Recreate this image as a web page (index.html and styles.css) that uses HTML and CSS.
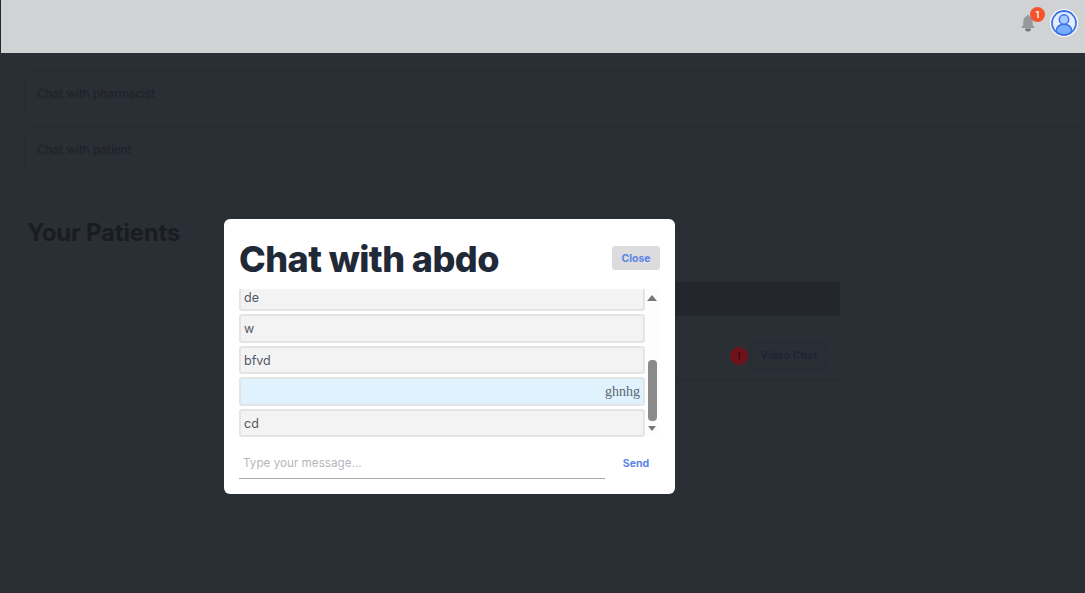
FILE: index.html
```html
<!DOCTYPE html>
<html lang="en">
<head>
<meta charset="utf-8">
<title>Chat</title>
<link rel="stylesheet" href="styles.css">
</head>
<body>
<header class="topbar">
  <div class="bell-wrap">
    <svg class="bell" viewBox="0 0 16 18" width="16" height="18"><path d="M8 1a1.300 1.300 0 0 0-1.300 1.300C4.300 3 3.300 5 3.300 7.500V11l-1.800 2.200V14h13v-.8L12.700 11V7.500C12.700 5 11.700 3 9.300 2.300A1.300 1.300 0 0 0 8 1z" fill="#96989b"/><path d="M5 14.500h6a3 3 0 0 1-6 0z" fill="#6f7377"/></svg>
    <span class="badge">1</span>
  </div>
  <div class="avatar">
    <svg viewBox="0 0 26 26" width="26" height="26"><circle cx="13" cy="13" r="12" fill="#e3edff" stroke="#3f73e0" stroke-width="1.800"/><path d="M5 21.500c.6-5 3.500-7.300 8-7.300s7.400 2.300 8 7.300A12 12 0 0 1 13 25a12 12 0 0 1-8-3.500z" fill="#78aeff" stroke="#3f73e0" stroke-width="1.500"/><circle cx="13" cy="9.500" r="4.700" fill="#a9caff" stroke="#3f73e0" stroke-width="1.500"/></svg>
  </div>
</header>
<main class="page">
  <div class="chat-card">Chat with pharmacist</div>
  <div class="chat-card">Chat with patient</div>
  <h2 class="section-title">Your Patients</h2>
  <div class="patients">
    <div class="table-head"></div>
    <div class="table-row">
      <span class="alert">!</span>
      <span class="video-btn">Video Chat</span>
    </div>
  </div>
</main>
<div class="modal">
  <div class="modal-head">
    <h1 class="modal-title">Chat with abdo</h1>
    <button class="close-btn">Close</button>
  </div>
  <div class="chat-body">
    <div class="messages">
      <div class="messages-inner">
        <div class="msg">de</div>
        <div class="msg">w</div>
        <div class="msg">bfvd</div>
        <div class="msg msg-own">ghnhg</div>
        <div class="msg">cd</div>
      </div>
    </div>
    <div class="scrollbar">
      <span class="arrow-up"></span>
      <span class="thumb"></span>
      <span class="arrow-down"></span>
    </div>
  </div>
  <div class="composer">
    <div class="input">Type your message...</div>
    <button class="send-btn">Send</button>
  </div>
</div>
</body>
</html>
```
FILE: styles.css
```css
* { box-sizing: border-box; }
html, body { margin: 0; height: 100%; }
body {
  background: #2a2e35;
  font-family: Inter, "Liberation Sans", sans-serif;
  overflow: hidden;
  position: relative;
}
.topbar {
  height: 53px;
  background: #d1d2d4;
  border-left: 1px solid #24272c;
  display: flex;
  justify-content: flex-end;
  align-items: flex-start;
  padding: 10px 8px 0 0;
}
.bell-wrap {
  position: relative;
  width: 16px;
  height: 18px;
  margin-top: 4px;
  margin-right: 15px;
}
.bell { display: block; }
.badge {
  position: absolute;
  left: 10px;
  top: -7px;
  width: 15px;
  height: 15px;
  border-radius: 50%;
  background: #f4532b;
  color: #fff;
  font-size: 9px;
  font-weight: 600;
  line-height: 15px;
  text-align: center;
}
.avatar {
  width: 26px;
  height: 26px;
  border-radius: 50%;
  background: #fff;
  box-shadow: 0 0 0 1px #fff;
}
.avatar svg { display: block; }
.page { padding: 18px 0 0 24px; }
.chat-card {
  height: 45px;
  margin-bottom: 11px;
  margin-right: -20px;
  border: 1px solid #272b31;
  border-radius: 8px;
  padding: 0 12px;
  font-size: 11.800px;
  line-height: 44px;
  color: #1e2127;
}
.section-title {
  margin: 45px 0 0 3px;
  font-size: 24px;
  line-height: 32px;
  font-weight: 700;
  letter-spacing: -0.2px;
  color: #191c21;
}
.patients { width: 540px; margin: 33px 0 0 276px; }
.table-head { height: 34px; background: #23262c; }
.table-row {
  height: 65px;
  border-bottom: 1px solid #25282e;
  display: flex;
  align-items: flex-end;
  justify-content: flex-end;
  padding: 0 13px 10px 0;
  gap: 2px;
}
.alert {
  width: 18px;
  height: 18px;
  margin-bottom: 5px;
  border-radius: 50%;
  background: #6f1219;
  color: #3a0b10;
  font-size: 11px;
  font-weight: 700;
  line-height: 18px;
  text-align: center;
}
.video-btn {
  width: 77px;
  height: 28px;
  border: 1px solid #232b38;
  border-radius: 6px;
  color: #1c2437;
  font-size: 10.500px;
  font-weight: 700;
  line-height: 26px;
  text-align: center;
}
.modal {
  position: absolute;
  left: 224px;
  top: 219px;
  width: 451px;
  height: 275px;
  background: #fff;
  border-radius: 6px;
  padding: 0 15px;
}
.modal-head {
  height: 70px;
  display: flex;
  align-items: center;
  justify-content: space-between;
}
.modal-title {
  margin: 0;
  font-size: 36px;
  line-height: 44px;
  font-weight: 800;
  color: #1f2937;
  letter-spacing: -0.550px;
  position: relative;
  top: 5px;
}
.close-btn {
  width: 48px;
  height: 24px;
  margin-top: 8px;
  border: 0;
  border-radius: 3px;
  background: #dcdcdf;
  color: #5b85e6;
  font: 700 10.500px Inter, "Liberation Sans", sans-serif;
  padding: 1px 0 0;
}
.chat-body {
  height: 148px;
  display: flex;
}
.messages {
  width: 406px;
  height: 148px;
  overflow: hidden;
}
.messages-inner {
  margin-top: -6px;
  display: flex;
  flex-direction: column;
  gap: 3px;
}
.msg {
  height: 28.400px;
  background: #f3f3f3;
  border: 2px solid #e4e4e4;
  border-radius: 3px;
  padding: 0 3px;
  font-size: 12.500px;
  line-height: 25px;
  color: #525866;
}
.msg-own {
  background: #dff2fe;
  text-align: right;
  font-family: "Liberation Serif", serif;
  font-size: 14px;
  color: #5c6470;
}
.scrollbar {
  width: 12px;
  margin-left: 1px;
  height: 148px;
  display: flex;
  flex-direction: column;
  align-items: center;
  background: #fdfdfd;
}
.arrow-up {
  margin-top: 6px;
  border-left: 5px solid transparent;
  border-right: 5px solid transparent;
  border-bottom: 6px solid #777;
}
.thumb {
  width: 9px;
  height: 61px;
  margin-top: 59px;
  margin-bottom: 5px;
  border-radius: 4px;
  background: #8a8a8a;
}
.arrow-down {
  border-left: 4px solid transparent;
  border-right: 4px solid transparent;
  border-top: 5px solid #777;
}
.composer {
  display: flex;
  align-items: flex-start;
  margin: 11px -15px 0 0;
}
.input {
  flex: none;
  width: 366px;
  height: 31px;
  border-bottom: 1px solid #a9a9a9;
  padding-left: 4px;
  font-size: 11.700px;
  line-height: 30px;
  color: #b5b7bb;
}
.send-btn {
  flex: none;
  width: 62px;
  height: 30px;
  border: 0;
  padding: 0;
  background: none;
  color: #5b85e6;
  font: 700 10.500px Inter, "Liberation Sans", sans-serif;
}
```
